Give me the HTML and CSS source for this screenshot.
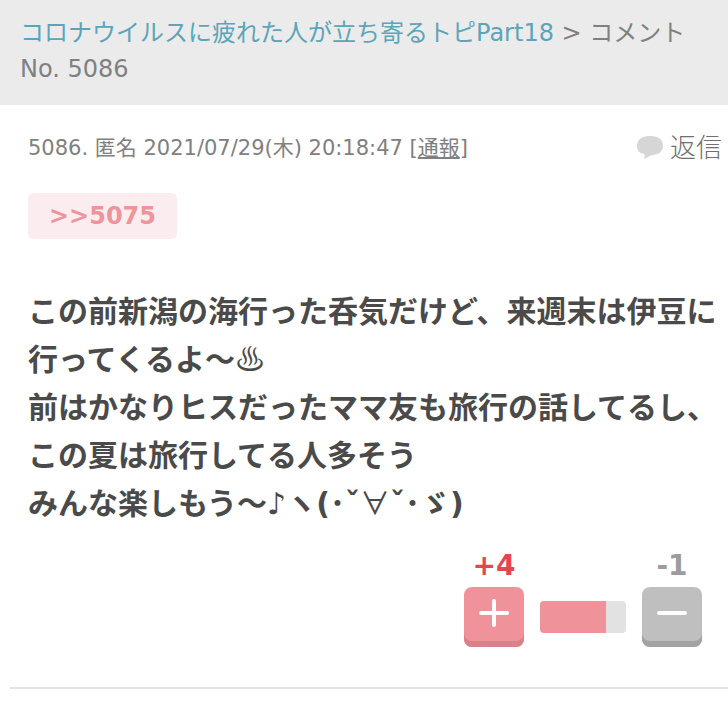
FILE: index.html
```
<!DOCTYPE html>
<html lang="ja">
<head>
    <meta charset="UTF-8">
    <meta name="viewport" content="width=device-width, initial-scale=1.0">
    <title>コメント No. 5086</title>
    <link rel="stylesheet" href="styles.css">
</head>
<body>
    <nav class="breadcrumb">
        <a href="#">コロナウイルスに疲れた人が立ち寄るトピPart18</a> &gt; コメント No. 5086
    </nav>

    <article class="comment">
        <header class="comment-header">
            <p class="comment-info">5086. 匿名 2021/07/29(木) 20:18:47 [<a href="#">通報</a>]</p>
            <a class="reply" href="#">
                <svg class="reply-icon" width="28" height="24" viewBox="0 0 28 24" aria-hidden="true">
                    <path d="M14 0C20 0 27 2 27 10C27 17 20 19 16 19C13 20 11 22 8 23C9 21 9 19 8 18C3 17 1 14 1 10C1 2 8 0 14 0Z" fill="#d6d6d6"/>
                </svg>
                返信
            </a>
        </header>

        <a class="anchor" href="#">&gt;&gt;5075</a>

        <p class="comment-body">この前新潟の海行った呑気だけど、来週末は伊豆に行ってくるよ〜<span class="symbol">♨</span><br>前はかなりヒスだったママ友も旅行の話してるし、<br>この夏は旅行してる人多そう<br>みんな楽しもう〜♪ヽ(･ˇ<span class="symbol">∀</span>ˇ･ゞ)</p>

        <div class="votes">
            <div class="vote">
                <span class="count count-plus">+4</span>
                <button class="vote-btn btn-plus" type="button" aria-label="プラス">
                    <svg width="30" height="30" viewBox="0 0 30 30" aria-hidden="true">
                        <path d="M2 15H28M15 3V27" stroke="#fff" stroke-width="4" stroke-linecap="round"/>
                    </svg>
                </button>
            </div>
            <div class="vote-bar"><div class="vote-bar-fill" style="width: 77%"></div></div>
            <div class="vote">
                <span class="count count-minus">-1</span>
                <button class="vote-btn btn-minus" type="button" aria-label="マイナス">
                    <svg width="30" height="30" viewBox="0 0 30 30" aria-hidden="true">
                        <path d="M2 15H28" stroke="#fff" stroke-width="4" stroke-linecap="round"/>
                    </svg>
                </button>
            </div>
        </div>
    </article>
</body>
</html>
```
FILE: styles.css
```
body {
    margin: 0;
    font-family: "DejaVu Sans", "Noto Sans CJK JP", sans-serif;
    color: #808080;
    background-color: #fff;
}

.breadcrumb {
    padding: 15px 20px 18px;
    font-size: 24px;
    line-height: 36px;
    background-color: #ebebeb;
}

.breadcrumb a {
    color: #5ba5b9;
    text-decoration: none;
}

.comment {
    margin-left: 10px;
    padding: 25px 6px 40px 18px;
    border-bottom: 2px solid #e3e3e3;
}

.comment-header {
    display: flex;
    justify-content: space-between;
    align-items: center;
    margin-bottom: 27px;
}

.comment-info {
    margin: 0;
    font-size: 21px;
    line-height: 36px;
}

.comment-info a {
    color: inherit;
}

.reply {
    display: flex;
    align-items: center;
    gap: 6px;
    font-size: 26px;
    font-weight: 300;
    line-height: 36px;
    color: #707070;
    text-decoration: none;
}

.anchor {
    display: inline-block;
    padding: 0 21px;
    border-radius: 6px;
    font-size: 24px;
    font-weight: bold;
    line-height: 46px;
    color: #ee949c;
    background-color: #fbedef;
    text-decoration: none;
}

.comment-body {
    margin: 49px 0 23px;
    font-size: 30px;
    font-weight: bold;
    line-height: 48px;
    color: #4a4a4a;
}

.symbol {
    font-family: "Noto Sans CJK JP", sans-serif;
    font-weight: normal;
    line-height: 1;
}

.votes {
    display: flex;
    justify-content: flex-end;
    align-items: flex-end;
    gap: 16px;
    padding-right: 20px;
}

.vote {
    display: flex;
    flex-direction: column;
    align-items: center;
    gap: 6px;
    width: 60px;
}

.count {
    font-size: 28px;
    font-weight: bold;
    line-height: 30px;
}

.count-plus {
    color: #e4484e;
}

.count-minus {
    color: #9c9c9c;
}

.vote-btn {
    display: flex;
    justify-content: center;
    align-items: center;
    width: 60px;
    height: 60px;
    padding: 0 0 8px;
    border: none;
    border-radius: 8px;
    cursor: pointer;
}

.btn-plus {
    background-color: #f0929a;
    box-shadow: inset 0 -6px #d9808a;
}

.btn-minus {
    background-color: #bfbfbf;
    box-shadow: inset 0 -6px #a3a3a3;
}

.vote-bar {
    width: 86px;
    height: 32px;
    margin-bottom: 14px;
    border-radius: 4px;
    background-color: #e2e2e2;
    overflow: hidden;
}

.vote-bar-fill {
    height: 100%;
    background-color: #f0929a;
}
```
